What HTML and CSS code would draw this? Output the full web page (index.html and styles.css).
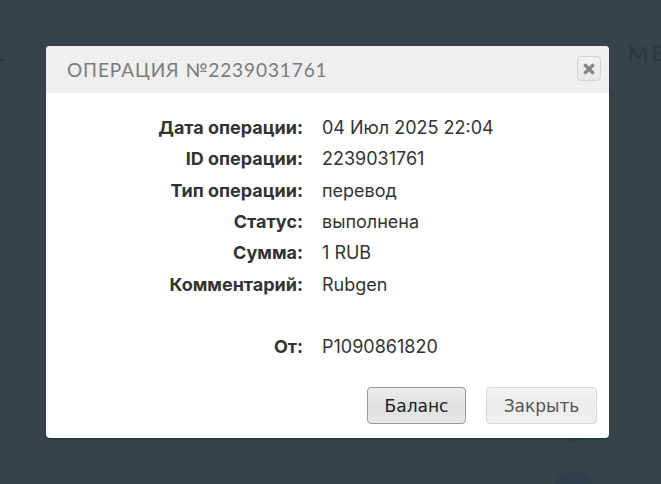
FILE: index.html
```html
<!DOCTYPE html>
<html lang="ru">
<head>
<meta charset="utf-8">
<title>Операция</title>
<link rel="stylesheet" href="styles.css">
</head>
<body>
<div class="page">
  <div class="nav">
    <span class="nav-item nav-left">L</span>
    <span class="nav-item nav-right">МЕТ</span>
  </div>
  <div class="dots">
    <span class="dot dot-1"></span>
    <span class="dot dot-2"></span>
  </div>
</div>
<div class="modal">
  <div class="modal-header">
    <h2 class="modal-title">ОПЕРАЦИЯ №2239031761</h2>
    <button class="close-btn" aria-label="Закрыть">
      <svg width="12" height="12" viewBox="0 0 12 12"><path d="M2.5 2.5 L9.5 9.5 M9.5 2.5 L2.5 9.5" stroke="#858585" stroke-width="3.2" stroke-linecap="square"/></svg>
    </button>
  </div>
  <div class="modal-body">
    <div class="details">
      <div class="label">Дата операции:</div><div class="value">04 Июл 2025 22:04</div>
      <div class="label">ID операции:</div><div class="value">2239031761</div>
      <div class="label">Тип операции:</div><div class="value">перевод</div>
      <div class="label">Статус:</div><div class="value">выполнена</div>
      <div class="label">Сумма:</div><div class="value">1 RUB</div>
      <div class="label">Комментарий:</div><div class="value">Rubgen</div>
      <div class="label"></div><div class="value"></div>
      <div class="label">От:</div><div class="value">P1090861820</div>
    </div>
  </div>
  <div class="modal-footer">
    <button class="btn btn-primary">Баланс</button>
    <button class="btn btn-secondary">Закрыть</button>
  </div>
</div>
</body>
</html>
```

FILE: styles.css
```css
html, body {
  margin: 0;
  padding: 0;
  overflow: hidden;
}
body {
  width: 661px;
  height: 484px;
  background: #37434b;
  position: relative;
  font-family: Inter, "Noto Sans", sans-serif;
}
.page {
  height: 484px;
  overflow: hidden;
}
.nav {
  display: flex;
  justify-content: space-between;
  height: 30px;
  line-height: 30px;
  padding-top: 38px;
  margin-left: -6px;
  margin-right: -22px;
  font-family: Lato, sans-serif;
  font-size: 22px;
  letter-spacing: 3px;
  color: #2c373e;
}
.dots {
  display: flex;
  flex-direction: column;
  align-items: center;
  width: 40px;
  height: 76px;
  overflow: hidden;
  margin-left: 553px;
  margin-top: 340px;
  gap: 29px;
}
.dot {
  display: block;
  flex-shrink: 0;
  border-radius: 50%;
  background: #2e3f4b;
}
.dot-1 {
  width: 34px;
  height: 34px;
}
.dot-2 {
  width: 40px;
  height: 40px;
}
.modal {
  position: absolute;
  left: 46px;
  top: 46px;
  width: 563px;
  height: 392px;
  background: #fff;
  border-radius: 4px;
  box-shadow: 0 1px 2px rgba(0,0,0,0.3);
  display: flex;
  flex-direction: column;
  overflow: hidden;
}
.modal-header {
  height: 47px;
  background: #efefef;
  display: flex;
  align-items: center;
  justify-content: space-between;
  padding: 0 8px 0 21px;
}
.modal-title {
  margin: 0;
  font-family: Lato, sans-serif;
  font-weight: 400;
  font-size: 19px;
  letter-spacing: 0.9px;
  color: #7b7b7b;
}
.close-btn {
  width: 24px;
  height: 25px;
  padding: 0;
  border: 1px solid #d4d4d4;
  border-radius: 4px;
  background: linear-gradient(#f2f2f2, #e8e8e8);
  display: flex;
  align-items: center;
  justify-content: center;
  margin-top: -2px;
}
.modal-body {
  flex: 1;
  padding-top: 19px;
}
.details {
  display: grid;
  grid-template-columns: 257px auto;
  column-gap: 19px;
  grid-auto-rows: 31.3px;
  align-items: center;
  font-size: 18px;
  color: #333;
}
.label {
  text-align: right;
  font-weight: 700;
  color: #333;
}
.value {
  color: #333;
}
.modal-footer {
  display: flex;
  justify-content: flex-end;
  gap: 20px;
  padding: 0 12px 14px 0;
}
.btn {
  height: 37px;
  border-radius: 4px;
  font-family: "DejaVu Sans", sans-serif;
  font-size: 17px;
  padding: 0;
}
.btn-primary {
  width: 99px;
  border: 1px solid #9a9a9a;
  background: linear-gradient(#ececec, #e0e0e0 50%, #e6e6e6);
  color: #222;
}
.btn-secondary {
  width: 111px;
  border: 1px solid #d6d6d6;
  background: linear-gradient(#f3f3f3, #ececec 50%, #f0f0f0);
  color: #555;
}
```
